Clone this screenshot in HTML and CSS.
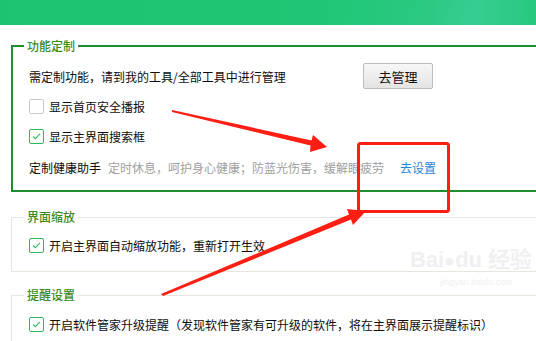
FILE: index.html
```html
<!DOCTYPE html>
<html lang="zh-CN">
<head>
    <meta charset="UTF-8">
    <title>设置</title>
    <link rel="stylesheet" href="styles.css">
</head>
<body>
    <div class="header"></div>

    <fieldset class="group group-main">
        <legend>功能定制</legend>
        <div class="manage-row">
            <span class="manage-text">需定制功能，请到我的工具/全部工具中进行管理</span>
            <button class="btn">去管理</button>
        </div>
        <label class="check-row">
            <span class="checkbox"></span>显示首页安全播报
        </label>
        <label class="check-row">
            <span class="checkbox checked"><svg viewBox="0 0 15 15"><polyline points="3.5,7.5 6.2,10 11.5,4.5"/></svg></span>显示主界面搜索框
        </label>
        <div class="health-row">
            <span>定制健康助手</span>
            <span class="hint">定时休息，呵护身心健康；防蓝光伤害，缓解眼疲劳</span>
            <a class="link">去设置</a>
        </div>
    </fieldset>

    <fieldset class="group">
        <legend>界面缩放</legend>
        <label class="check-row">
            <span class="checkbox checked"><svg viewBox="0 0 15 15"><polyline points="3.5,7.5 6.2,10 11.5,4.5"/></svg></span>开启主界面自动缩放功能，重新打开生效
        </label>
    </fieldset>

    <fieldset class="group group-last">
        <legend>提醒设置</legend>
        <label class="check-row">
            <span class="checkbox checked"><svg viewBox="0 0 15 15"><polyline points="3.5,7.5 6.2,10 11.5,4.5"/></svg></span>开启软件管家升级提醒（发现软件管家有可升级的软件，将在主界面展示提醒标识）
        </label>
    </fieldset>

    <div class="watermark">
        <span class="wm-logo">Bai<span class="wm-paw">●</span>du 经验</span>
        <span class="wm-url">jingyan.baidu.com</span>
    </div>

    <svg class="marks" width="536" height="341" viewBox="0 0 536 341">
        <rect x="358.5" y="143.5" width="90" height="68" rx="2" fill="none" stroke="#ff1e12" stroke-width="3"/>
        <polygon fill="#ff1e12" points="172,110 311.5,140.5 313,135 327,147 310,152 310.5,145.5 172,112"/>
        <polygon fill="#ff1e12" points="161,294 349,214.5 347,209 366,211 353,225 351,219.5 163,296"/>
    </svg>
</body>
</html>
```

FILE: styles.css
```css
body {
    margin: 0;
    width: 536px;
    height: 341px;
    overflow: hidden;
    position: relative;
    background-color: #fff;
    color: #0d0d0d;
    font-family: "Noto Sans CJK SC", "Microsoft YaHei", sans-serif;
    font-size: 12px;
}

.header {
    height: 25px;
    background: linear-gradient(100deg, #1bc46f 0%, #1fc774 60%, #2cc983 80%, #37cd92 88%, #27c87e 100%);
}

.group {
    width: 600px;
    box-sizing: border-box;
    margin: 18px 0 0 11px;
    padding: 6px 0 11px 17px;
    border: 1px solid #e6e6df;
}

.group legend {
    margin-left: -5px;
    padding: 0 3px;
    line-height: 14px;
    color: #3a8a1c;
    font-weight: 500;
}

.group-main {
    margin-top: 14px;
    padding: 10px 0 8px 16px;
    border: 2px solid #1e8e2e;
}

.group-last {
    margin-top: 16px;
    padding-top: 7px;
}

.manage-row {
    display: flex;
    align-items: center;
    height: 26px;
    margin-bottom: 2px;
}

.manage-text {
    width: 334px;
}

.btn {
    width: 70px;
    height: 26px;
    padding: 0;
    border: 1px solid #bdbdbd;
    border-radius: 2px;
    background: linear-gradient(#f7f7f7, #e3e3e3);
    color: #111;
    font-family: inherit;
    font-size: 13px;
}

.check-row {
    display: flex;
    align-items: center;
    height: 30px;
}

.checkbox {
    width: 13px;
    height: 13px;
    margin-right: 5px;
    border: 1px solid #c9c9c9;
    border-radius: 2px;
    background-color: #fff;
}

.checkbox.checked {
    border-color: #2cba5a;
}

.checkbox svg {
    display: block;
    width: 13px;
    height: 13px;
    fill: none;
    stroke: #2cba5a;
    stroke-width: 1.2;
}

.health-row {
    display: flex;
    align-items: center;
    height: 30px;
    margin-top: 1px;
}

.hint {
    margin-left: 7px;
    color: #a0a0a0;
}

.link {
    margin-left: 16px;
    color: #2b86d9;
}

.watermark {
    position: absolute;
    left: 410px;
    top: 244px;
    display: flex;
    flex-direction: column;
    color: #f0f0f0;
    font-family: "Liberation Sans", "Noto Sans CJK SC", sans-serif;
}

.wm-logo {
    font-size: 22px;
    font-weight: bold;
    line-height: 32px;
}

.wm-paw {
    font-size: 18px;
}

.wm-url {
    padding-left: 30px;
    font-size: 9px;
}

.marks {
    position: absolute;
    left: 0;
    top: 0;
    pointer-events: none;
}
```
